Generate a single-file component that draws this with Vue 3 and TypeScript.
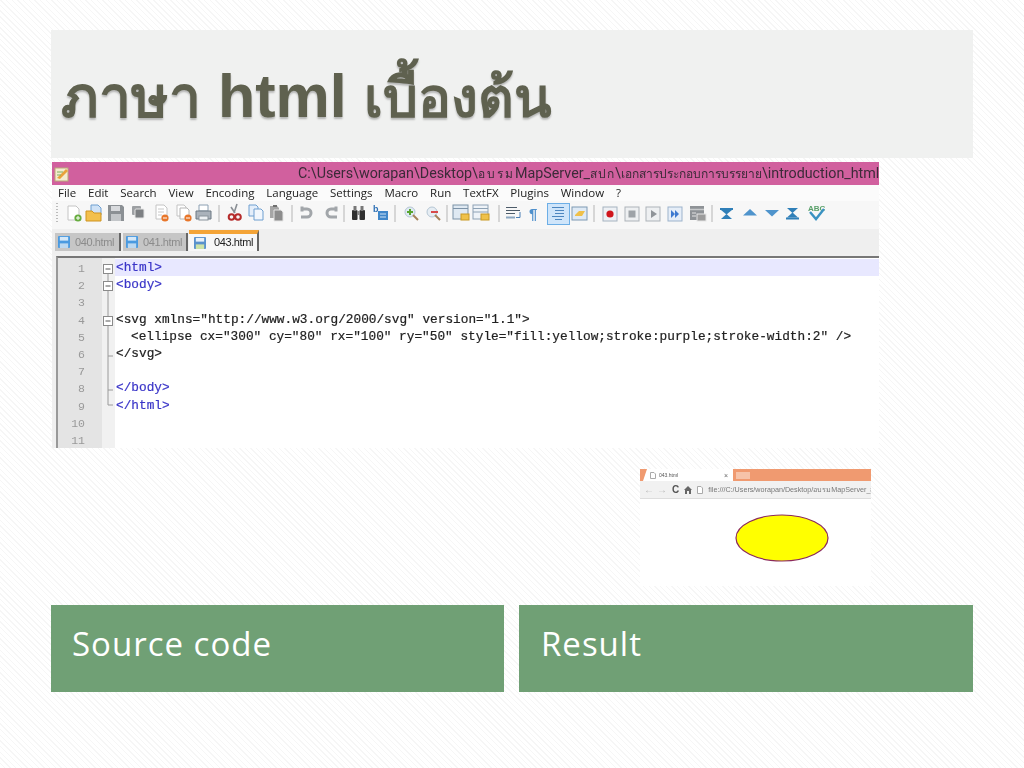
<script setup lang="ts">
const menus = ['File','Edit','Search','View','Encoding','Language','Settings','Macro','Run','TextFX','Plugins','Window','?']
const gutter = Array.from({ length: 11 }, (_, i) => i + 1)
</script>

<template>
  <div class="slide">
    <header class="title"><h1><span class="th first">ภาษา</span> html <span class="th last">เบื้องต้น</span></h1></header>

    <section class="editor">
      <div class="titlebar">
        <svg class="appicon" width="16" height="16" viewBox="0 0 16 16"><rect x="1" y="2" width="13" height="13" fill="#f4ecd0" stroke="#b9a878"/><path d="M3 12 L12 3 L14 5 L6 13 Z" fill="#e9a23b"/><path d="M3 6h6M3 9h4" stroke="#7fb05f"/></svg>
        <span class="path">C:\Users\worapan\Desktop\<span class="pth wide">อบรม</span>MapServer_<span class="pth mid">สปก</span>\<span class="pth">เอกสารประกอบการบรรยาย</span>\introduction_html</span>
      </div>
      <nav class="menubar"><span v-for="m in menus" :key="m">{{ m }}</span></nav>
      <div class="toolbar">
        <i class="grip"></i>
        <svg width="790" height="24" viewBox="0 0 790 24" class="tools">
          <g transform="translate(5,4)"><path d="M1 1h8l3 3v11H1z" fill="#fff" stroke="#c4c4c4"/><circle cx="11" cy="13" r="3.6" fill="#67ad3f"/><path d="M9 13h4M11 11v4" stroke="#fff"/></g>
          <g transform="translate(24,4)"><path d="M5 0h7l3 3v7H5z" fill="#cfe2f6" stroke="#6f9fd0"/><path d="M0 6h6l2 2h7v8H0z" fill="#f3c04c" stroke="#cf9420"/></g>
          <g transform="translate(46,4)"><path d="M0 0h14l2 2v14H0z" fill="#8b9094"/><rect x="3" y="1" width="9" height="5" fill="#d8dadd"/><rect x="3" y="9" width="10" height="7" fill="#c3c6c9"/></g>
          <g transform="translate(70,5)"><rect x="0" y="0" width="9" height="9" rx="1" fill="#9da0a3"/><rect x="3" y="3" width="9" height="9" rx="1" fill="#7d8083" stroke="#e4e4e4"/></g>
          <g transform="translate(94,4)"><path d="M0 0h8l3 3v11H0z" fill="#fff" stroke="#c4c4c4"/><path d="M2 4h6M2 7h6M2 10h4" stroke="#c8c8c8"/><circle cx="9" cy="13" r="3.6" fill="#e8762a"/><path d="M7 13h4" stroke="#fff"/></g>
          <g transform="translate(115,4)"><path d="M0 0h7l2 2v9H0z" fill="#fff" stroke="#c3c3c3"/><path d="M3 3h7l2 2v9H3z" fill="#fff" stroke="#b5b5b5"/><circle cx="11" cy="13" r="3.6" fill="#e8762a"/><path d="M9 13h4" stroke="#fff"/></g>
          <g transform="translate(133,4)"><path d="M4 0h9v6H4z" fill="#fff" stroke="#8ca0b3"/><path d="M1 6h15v8H1z" fill="#aab2bb" stroke="#6d7883"/><rect x="4" y="11" width="9" height="4" fill="#eef1f4" stroke="#8a939c"/></g>
          <path d="M157 4v17M230 4v17M282 4v17M333 4v17M385 4v17M437 4v17M532 4v17M650 4v17" stroke="#b5b5b5"/>
          <g transform="translate(166,3)"><path d="M9 0L6 9M3 3l4 6" stroke="#8a8f95" stroke-width="1.6" fill="none"/><circle cx="3.5" cy="13" r="2.8" fill="none" stroke="#b52b2b" stroke-width="2"/><circle cx="10" cy="13" r="2.8" fill="none" stroke="#b52b2b" stroke-width="2"/></g>
          <g transform="translate(187,4)"><path d="M0 0h7l2 2v9H0z" fill="#e4eefa" stroke="#6f9fd0"/><path d="M5 4h7l2 2v9H5z" fill="#f2f7fd" stroke="#6f9fd0"/></g>
          <g transform="translate(208,4)"><path d="M0 1h7l2 2v10H0z" fill="#a6a6a6"/><path d="M4 5h7l2 2v9H4z" fill="#8d8d8d" stroke="#e5e5e5"/><rect x="3" y="0" width="4" height="2" fill="#6f6f6f"/></g>
          <path d="M240 8h5a4 4 0 0 1 0 8h-6M240 5.500v5" fill="none" stroke="#a2a6aa" stroke-width="3"/>
          <path d="M274 8h-5a4 4 0 0 0 0 8h6M274 5.500v5" fill="none" stroke="#a2a6aa" stroke-width="3"/>
          <g transform="translate(290,5)" fill="#2f2f2f"><rect x="0" y="4" width="5.500" height="10" rx="1"/><rect x="7.500" y="4" width="5.500" height="10" rx="1"/><rect x="1.500" y="0" width="3" height="5" fill="#777"/><rect x="8.500" y="0" width="3" height="5" fill="#777"/><rect x="5" y="5" width="3" height="4" fill="#888"/></g>
          <g transform="translate(311,4)"><text x="0" y="7" class="ab" fill="#2c6fb5">b</text><rect x="5" y="6" width="10" height="9" fill="#3f86c9"/><path d="M7 9h6M7 12h6" stroke="#cfe3f6"/></g>
          <g transform="translate(342,5)"><circle cx="6" cy="6" r="5" fill="#dfeaf3" stroke="#b5c6d4"/><path d="M9 9l5 5" stroke="#a5825a" stroke-width="2"/><path d="M6 3v6M3 6h6" stroke="#58a52e" stroke-width="2"/></g>
          <g transform="translate(364,5)"><circle cx="6" cy="6" r="5" fill="#e6edf3" stroke="#b5c6d4"/><path d="M9 9l5 5" stroke="#a5825a" stroke-width="2"/><path d="M5 6h7" stroke="#d84a4a" stroke-width="2"/></g>
          <g transform="translate(391,4)"><rect x="0" y="0" width="15" height="14" fill="#dfe9f2" stroke="#7d93a8"/><path d="M0 3.500h15" stroke="#7d93a8"/><rect x="8" y="9" width="8" height="6" fill="#efc14a" stroke="#c99a25"/></g>
          <g transform="translate(411,4)"><rect x="0" y="0" width="15" height="14" fill="#eef3f8" stroke="#8ea2b5"/><path d="M0 3.500h15M0 7h15" stroke="#8ea2b5"/><rect x="8" y="9" width="8" height="6" fill="#efc14a" stroke="#c99a25"/></g>
          <g transform="translate(444,6)"><path d="M0 .5h11M0 3.500h14M0 6.500h9" stroke="#4c5b69"/><path d="M0 10.500h9" stroke="#8aa6c1" stroke-width="2"/><path d="M14 5v5.500h-4" stroke="#4a7fb5" fill="none"/></g>
          <text x="467" y="18" class="pil" fill="#4f90cc">¶</text>
          <rect x="485.500" y="2.500" width="22" height="21" fill="#cfe5fa" stroke="#6caee6"/>
          <g transform="translate(490,6)"><path d="M0 .5h12M3 3.500h9M3 6.500h9M0 9.500h12M3 12.500h7" stroke="#4d86bf"/></g>
          <g transform="translate(510,6)"><rect x="0" y="0" width="15" height="13" fill="#dfeaf5" stroke="#7e9ab3"/><path d="M3 8l4-4h6l-3 5H3z" fill="#efc04a"/></g>
          <g transform="translate(541,6)"><rect x="0" y="0" width="14" height="14" fill="#eef1f5" stroke="#a6b3c0"/><circle cx="7" cy="7" r="3.600" fill="#d0161d"/></g>
          <g transform="translate(563,6)"><rect x="0" y="0" width="14" height="14" fill="#eef0f2" stroke="#adb3b9"/><rect x="3.500" y="3.500" width="7" height="7" fill="#9ea3a8"/></g>
          <g transform="translate(584,6)"><rect x="0" y="0" width="14" height="14" fill="#eef0f2" stroke="#adb3b9"/><path d="M5 3l6 4-6 4z" fill="#8f9499"/></g>
          <g transform="translate(606,6)"><rect x="0" y="0" width="14" height="14" fill="#e6eef8" stroke="#9db3cc"/><path d="M3 3l4 4-4 4zM7 3l4 4-4 4z" fill="#3f7ad0"/></g>
          <g transform="translate(628,5)"><rect x="0" y="0" width="14" height="14" fill="#8e9296"/><path d="M0 3.500h14" stroke="#c7c9cb" stroke-width="1.500"/><rect x="7" y="8" width="9" height="7" fill="#9c9c9c" stroke="#e6e6e6"/><path d="M2 7h4M2 10h4" stroke="#e3e3e3"/></g>
          <g transform="translate(658,7)" fill="#2f7fb8"><path d="M0 0h13v2H0z"/><path d="M1 2h11L6.500 6.500z"/><path d="M6.500 6L12 11H1z"/></g>
          <path d="M681 14.500l7-6.500 7 6.500z" fill="#4f94cc"/>
          <path d="M703 9h14l-7 6.500z" fill="#4f94cc"/>
          <g transform="translate(724,7)" fill="#2f7fb8"><path d="M1 0h11L6.500 5z"/><path d="M6.500 4.500L12 9.500H1z"/><path d="M0 9.500h13v2H0z"/></g>
          <text x="746" y="10" class="abc" fill="#5aa06a">ABC</text>
          <path d="M748 11l6 7 8-10" fill="none" stroke="#3a92c2" stroke-width="2.400"/>
        </svg>
      </div>
      <div class="tabs">
        <div class="tab off"><svg class="disk" viewBox="0 0 13 13"><rect width="13" height="13" rx="1" fill="#4a9ae0"/><rect x="2" y="1" width="9" height="4" fill="#d5e8f8"/><rect x="2" y="8" width="9" height="5" fill="#bcd8f0"/></svg>040.html</div>
        <div class="tab off second"><svg class="disk" viewBox="0 0 13 13"><rect width="13" height="13" rx="1" fill="#4a9ae0"/><rect x="2" y="1" width="9" height="4" fill="#d5e8f8"/><rect x="2" y="8" width="9" height="5" fill="#bcd8f0"/></svg>041.html</div>
        <div class="tab on"><svg class="disk" viewBox="0 0 13 13"><rect width="13" height="13" rx="1" fill="#5a92cc"/><rect x="2" y="1" width="9" height="4" fill="#e8f1fa"/><rect x="2" y="8" width="9" height="5" fill="#cde3a8"/></svg>043.html</div>
      </div>
      <div class="code">
        <div class="gutter"><span v-for="n in gutter" :key="n">{{ n }}</span></div>
        <div class="fold">
          <svg width="12" height="190" viewBox="0 0 12 190">
            <path d="M6 14V145h5M6 96h5M6 130h5" fill="none" stroke="#9a9a9a"/>
            <g fill="#fff" stroke="#8a8a8a">
              <rect x="1.500" y="4.500" width="9" height="9"/><rect x="1.500" y="21.500" width="9" height="9"/><rect x="1.500" y="56.500" width="9" height="9"/>
            </g>
            <path d="M3.500 9h5M3.500 26h5M3.500 61h5" stroke="#555"/>
          </svg>
        </div>
        <div class="lines">
          <div class="line active tag">&lt;html&gt;</div>
          <div class="line tag">&lt;body&gt;</div>
          <div class="line"></div>
          <div class="line">&lt;svg xmlns="http://www.w3.org/2000/svg" version="1.1"&gt;</div>
          <div class="line indent">&lt;ellipse cx="300" cy="80" rx="100" ry="50" style="fill:yellow;stroke:purple;stroke-width:2" /&gt;</div>
          <div class="line">&lt;/svg&gt;</div>
          <div class="line"></div>
          <div class="line tag">&lt;/body&gt;</div>
          <div class="line tag">&lt;/html&gt;</div>
        </div>
      </div>
    </section>

    <section class="browser">
      <div class="chrome">
        <div class="btab">
          <svg width="6" height="7" viewBox="0 0 6 7"><path d="M.5.5h3.500l1.500 1.500v4.500h-5z" fill="#fff" stroke="#aaa"/></svg>
          <span>043.html</span><b>×</b>
        </div>
        <div class="bnew"></div>
      </div>
      <div class="address">
        <span class="nav">←<i class="sp"></i>→<i class="sp"></i><em>C</em></span>
        <svg class="aicon" width="8" height="8" viewBox="0 0 8 8"><path d="M4 0L0 4h1v4h2V5h2v3h2V4h1z" fill="#666"/></svg>
        <svg class="aicon" width="6" height="8" viewBox="0 0 6 8"><path d="M.5.5h3.500l1.500 1.500v5.500h-5z" fill="#fff" stroke="#aaa"/></svg>
        <span class="url">file:///C:/Users/worapan/Desktop/อบรมMapServer_สป</span>
      </div>
      <div class="page">
        <svg width="94" height="48" viewBox="0 0 94 48"><ellipse cx="47" cy="24" rx="46" ry="23" fill="#ff0" stroke="#8b2a5b" stroke-width="1.200"/></svg>
      </div>
    </section>

    <section class="captions">
      <div class="caption">Source code</div>
      <div class="caption second">Result</div>
    </section>
  </div>
</template>

<style>
html, body { margin: 0; background: #fff; }
</style>

<style scoped>
.slide {
  width: 1024px;
  height: 768px;
  box-sizing: border-box;
  padding: 30px 51px 0;
  overflow: hidden;
  background: repeating-linear-gradient(45deg, #fff 0 3px, #f6f6f6 3px 4px);
  font-family: "Open Sans", "Noto Sans", sans-serif;
}
.title {
  height: 128px;
  background: #f0f1f0;
  display: flex;
  align-items: center;
  padding-left: 10px;
}
h1 {
  margin: 4px 0 0;
  font: 700 61px/1 "Liberation Sans", "Noto Sans", sans-serif;
  color: #5f614f;
  text-shadow: 0 2px 2px rgba(0,0,0,.25);
  white-space: nowrap;
}
.th { font-family: "DejaVu Sans", "Noto Sans", sans-serif; }
.first { font-size: 57px; }
.last { font-size: 55px; }
.editor {
  margin: 4px 0 0 1px;
  width: 827px;
  height: 286px;
  background: #f0f0f0;
  overflow: hidden;
  filter: blur(.4px);
}
.titlebar {
  height: 23px;
  background: #d1609e;
  display: flex;
  align-items: center;
  padding-left: 2px;
  white-space: nowrap;
  overflow: hidden;
}
.appicon { flex: none; }
.path {
  margin-left: 228px;
  font: 14.300px Roboto, "Noto Sans", sans-serif;
  color: #3c2a38;
}
.pth { font-size: 12px; }
.wide { letter-spacing: 2px; }
.mid { letter-spacing: 1px; }
.menubar {
  height: 16px;
  background: #fbfbfb;
  display: flex;
  gap: 11.800px;
  padding-left: 6px;
  font-size: 11.500px;
  line-height: 16px;
  color: #222;
}
.toolbar {
  height: 28px;
  background: #f7f7f7;
  display: flex;
  align-items: flex-start;
  gap: 4px;
  padding-left: 4px;
}
.grip { width: 2px; height: 20px; margin-top: 2px; background: repeating-linear-gradient(#bbb 0 1px, transparent 1px 3px); }
.tools { flex: none; }
.ab { font: 700 9px "Liberation Sans", sans-serif; }
.pil { font: 700 15px "Liberation Sans", sans-serif; }
.abc { font: 700 8px "Liberation Sans", sans-serif; }
.tabs {
  height: 25px;
  background: #efefef;
  display: flex;
  align-items: flex-end;
  padding: 0 0 3px 3px;
  gap: 1px;
  box-sizing: border-box;
  font: 11px/1 "Liberation Sans", sans-serif;
  letter-spacing: -.4px;
}
.tab {
  height: 18px;
  display: flex;
  align-items: center;
  gap: 5px;
  padding: 0 3px;
  box-sizing: border-box;
  border-right: 2px solid #666;
}
.tab.off { background: #c6c6c6; color: #8b8b8b; width: 66px; }
.tab.second { width: 65px; margin-left: 1px; }
.tab.on { background: #f7f7f7; color: #222; width: 70px; height: 21px; border-top: 4px solid #f4a437; padding-left: 5px; gap: 8px; }
.disk { width: 12px; height: 12px; flex: none; }
.code {
  margin: 2px 0 0 4px;
  height: 200px;
  display: flex;
  background: #fff;
  border-top: 2px solid #777;
  border-left: 2px solid #999;
}
.gutter {
  width: 44px;
  flex: none;
  background: #e4e4e4;
  font: 11.500px/17.200px "Liberation Mono", monospace;
  color: #999;
  display: flex;
  flex-direction: column;
  align-items: flex-end;
  padding: 2px 17px 0 0;
  box-sizing: border-box;
}
.fold { width: 13px; flex: none; background: #f1f1f1; padding-top: 2px; box-sizing: border-box; }
.fold svg { display: block; }
.lines {
  flex: 1;
  padding-top: 1px;
  font: 12.770px/17.200px "Liberation Mono", monospace;
  color: #222;
  white-space: pre;
  -webkit-text-stroke: .2px currentColor;
}
.line { height: 17.200px; padding-left: 1px; }
.indent { padding-left: 16px; }
.tag { color: #3a35c8; }
.active { background: #e8e8ff; }
.browser {
  margin: 21px 0 0 589px;
  width: 231px;
  height: 117px;
  background: #fff;
  overflow: hidden;
  filter: blur(.4px);
}
.chrome { height: 12px; background: #f09a70; display: flex; align-items: flex-end; padding-left: 3px; gap: 3px; }
.btab {
  width: 90px;
  height: 12px;
  background: #fff;
  clip-path: polygon(4px 0, 100% 0, 100% 100%, 0 100%);
  display: flex;
  align-items: center;
  gap: 3px;
  padding: 0 5px 0 7px;
  box-sizing: border-box;
  font: 5px "Liberation Sans", sans-serif;
  color: #555;
}
.btab b { margin-left: auto; font-size: 7px; color: #666; font-weight: 400; }
.bnew { width: 14px; height: 7px; background: #f6c3a9; margin-bottom: 2px; }
.address {
  height: 18px;
  background: #f1f1f1;
  border-bottom: 1px solid #ddd;
  box-sizing: border-box;
  display: flex;
  align-items: center;
  gap: 5px;
  padding-left: 4px;
  font: 7.200px "Liberation Sans", sans-serif;
  color: #777;
  white-space: nowrap;
}
.aicon { flex: none; }
.nav { color: #bbb; font-size: 10px; display: flex; flex: none; }
.sp { width: 3px; }
.nav em { font-style: normal; font-weight: 700; color: #555; margin-left: 2px; }
.url { flex: 1; min-width: 0; }
.page { padding: 15px 0 0 95px; }
.page svg { display: block; }
.captions {
  margin-top: 19px;
  display: grid;
  grid-template-columns: 453px 454px;
  gap: 15px;
}
.caption {
  height: 87px;
  background: #70a075;
  color: #fff;
  font: 33px/77px "Open Sans", "Noto Sans", sans-serif;
  letter-spacing: 1px;
  padding-left: 21px;
  box-sizing: border-box;
}
.caption.second { padding-left: 22px; }
</style>
